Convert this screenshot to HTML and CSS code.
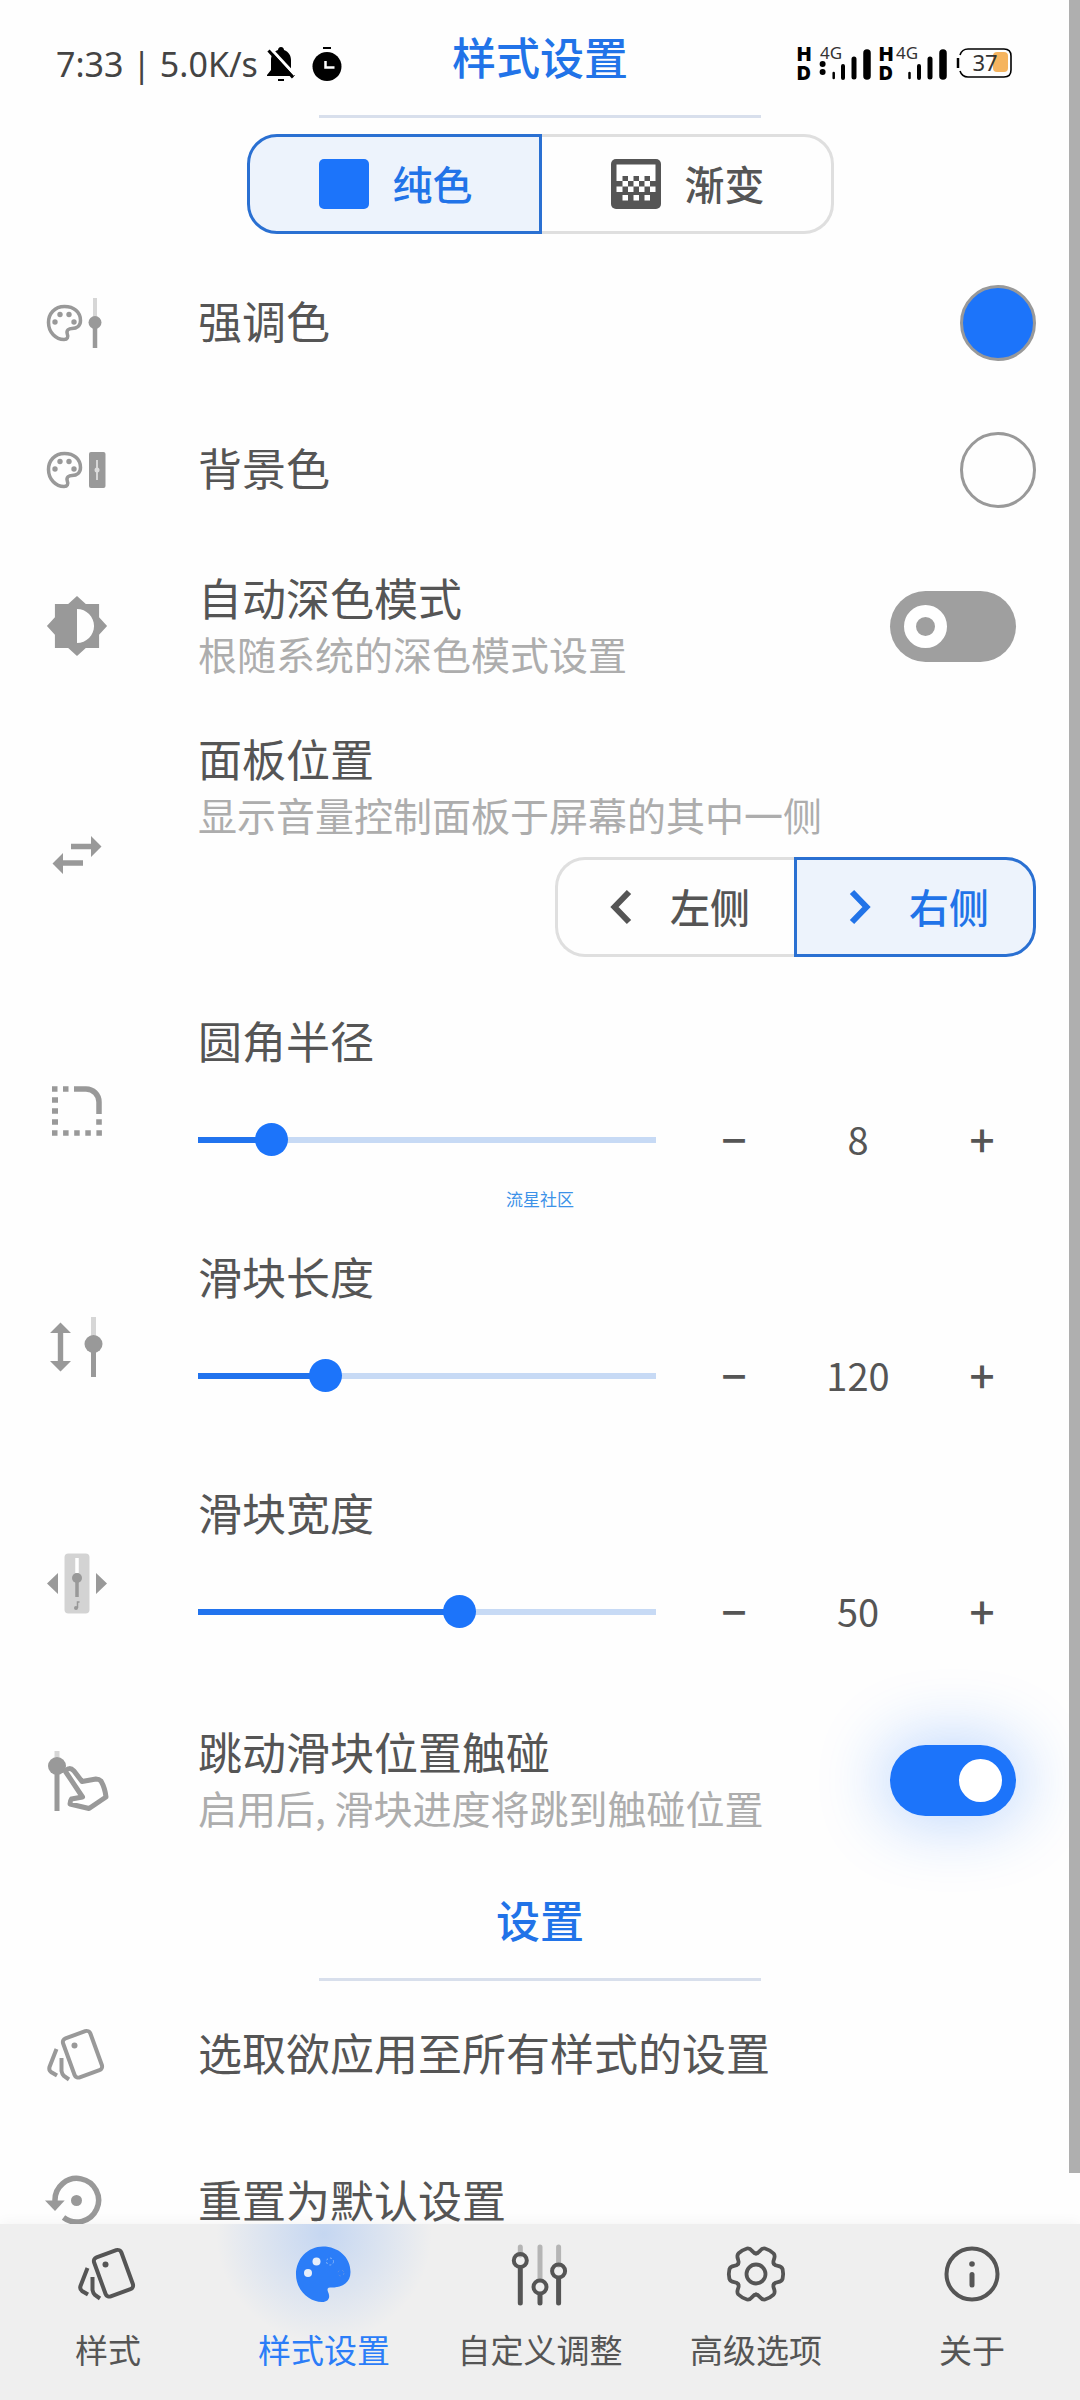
FILE: index.html
```html
<!DOCTYPE html>
<html lang="zh-CN">
  <head>
    <meta charset="UTF-8" />
    <meta name="viewport" content="width=device-width, initial-scale=1.0" />
    <title>样式设置</title>
    <link rel="stylesheet" href="styles.css">
  </head>
  <body>
    <!-- shared icon shapes -->
    <svg class="sprite" aria-hidden="true">
      <symbol id="palette" viewBox="0 0 66 66">
        <path d="M20.5 16.5C10.5 16.5 4.5 24 4.5 32.5C4.5 42.5 12 49.5 20 49.5C23.5 49.5 24.5 47 23.3 44C22 40 25 38.5 28 38.5C33 38.5 36.5 35.5 36.5 30.5C36.5 22 30 16.5 20.5 16.5Z" fill="none" stroke="currentColor" stroke-width="3.500" />
        <g fill="currentColor">
          <circle cx="11" cy="32" r="2.7" />
          <circle cx="16" cy="24.5" r="2.7" />
          <circle cx="25" cy="24.5" r="2.7" />
          <circle cx="30" cy="32" r="2.7" />
        </g>
      </symbol>
      <symbol id="cards" viewBox="0 0 66 66">
        <g fill="none" stroke="currentColor" stroke-width="4">
          <rect x="24" y="11.5" width="29" height="41.5" rx="4" transform="rotate(-20 38.5 32.3)" />
          <path d="M12.5 27L5.5 45Q4.5 48 7 50L13 53.5" />
          <path d="M17.5 36V49Q18 52 20 54L25 57.5" />
        </g>
        <circle cx="30.5" cy="23.5" r="3" fill="currentColor" />
      </symbol>
      <symbol id="gear-tooth" viewBox="-33 -33 66 66">
        <path d="M0-20.5C4-20.5 4-26.5 9-25.5Q14-24 17.6-20.5C20.9-16.7 15.75-13.7 17.75-10.25" />
      </symbol>
    </svg>

    <div class="status-bar">
      <div class="status-left">
        <span>7:33 | 5.0K/s</span>
        <svg class="status-icon" viewBox="0 0 30 36" aria-hidden="true">
          <path d="M15 1C17 1 18 2.500 18 4C23 6 25 10 25 14V24L29 29V30H1V29L5 24V14C5 10 7 6 12 4C12 2.500 13 1 15 1Z" />
          <path d="M12 33H18V35H12Z" />
          <path d="M5 3L29 29" stroke="#fff" stroke-width="3" />
          <path d="M2.500 4.500L27 31.500" stroke="#000" stroke-width="3" />
        </svg>
        <svg class="status-icon" viewBox="0 0 30 36" aria-hidden="true">
          <circle cx="15" cy="20.500" r="14.500" />
          <path d="M11 1H19V3H11Z" />
          <path d="M13.500 15V21.500H22.500" fill="none" stroke="#fff" stroke-width="2.500" />
        </svg>
      </div>
      <svg class="status-right" viewBox="0 0 218 40" aria-hidden="true">
        <g class="status-hd">
          <text x="2" y="17">H</text>
          <text x="2" y="36">D</text>
          <text x="84" y="17">H</text>
          <text x="84" y="36">D</text>
        </g>
        <g class="status-net">
          <text x="25" y="15">4G</text>
          <text x="101" y="15">4G</text>
        </g>
        <circle cx="27.600" cy="20" r="3" />
        <circle cx="27.600" cy="28" r="3" />
        <g stroke="#000" stroke-linecap="round">
          <path d="M38.700 29V34M114.500 29V34" stroke-width="2.500" />
          <path d="M48 22V34M124 22V34" stroke-width="4" />
          <path d="M59 15V33M135 15V33" stroke-width="5" />
          <path d="M72 9V32M148 9V32" stroke-width="7.500" />
        </g>
        <rect x="198" y="8" width="15" height="20" rx="4" fill="#f5b45f" />
        <path d="M165 11Q167 5 173 5H209Q216 5 216 12V26Q216 33 209 33H173Q167 33 165 27" fill="none" stroke="#000" stroke-width="1.600" />
        <path d="M163 14V24" stroke="#000" stroke-width="2.500" />
        <text class="status-level" x="190" y="27">37</text>
      </svg>
    </div>

    <main class="content">
      <div class="heading"><h1>样式设置</h1></div>

      <div class="fill-mode">
        <div class="segment segment-wide" role="group" aria-label="填充">
          <button type="button" class="active" aria-pressed="true">
            <svg class="segment-icon" viewBox="0 0 50 50" aria-hidden="true">
              <rect width="50" height="50" rx="5" class="accent-fill" />
            </svg>
            <span>纯色</span>
          </button>
          <button type="button" aria-pressed="false">
            <svg class="segment-icon" viewBox="0 0 50 50" aria-hidden="true">
              <rect width="50" height="50" rx="5" fill="currentColor" />
              <path fill="#fff" d="M5.500 5.500H44.500V22H39V17H33.500V22H28V17H22.500V22H17V17H11.500V22H5.500Z" />
              <path fill="#fff" d="M11.500 22H17V27.500H11.500ZM22.500 22H28V27.500H22.500ZM33.500 22H39V27.500H33.500ZM5.500 27.500H11.500V33H5.500ZM17 27.500H22.500V33H17ZM28 27.500H33.500V33H28ZM39 27.500H44.500V33H39ZM11.500 36H17V41.500H11.500ZM22.500 36H28V41.500H22.500ZM33.500 36H39V41.500H33.500Z" />
            </svg>
            <span>渐变</span>
          </button>
        </div>
      </div>

      <div class="row">
        <svg class="icon" viewBox="0 0 66 66" aria-hidden="true">
          <use href="#palette" />
          <path d="M51 8V32" class="pale" stroke-width="4" />
          <path d="M51 32V58" stroke="currentColor" stroke-width="4.500" />
          <circle cx="51" cy="32.500" r="6.500" fill="currentColor" />
        </svg>
        <span class="title">强调色</span>
        <button type="button" class="swatch swatch-accent" aria-label="强调色"></button>
      </div>

      <div class="row">
        <svg class="icon" viewBox="0 0 66 66" aria-hidden="true">
          <use href="#palette" />
          <rect x="45" y="15" width="16.500" height="36" rx="2" fill="currentColor" />
          <path d="M53 23V43" stroke="#ddd" stroke-width="1.800" />
          <circle cx="53" cy="33" r="2.500" fill="#ddd" />
        </svg>
        <span class="title">背景色</span>
        <button type="button" class="swatch" aria-label="背景色"></button>
      </div>

      <div class="row row-two-line">
        <svg class="icon" viewBox="-0.4 -0.4 24.8 24.8" aria-hidden="true">
          <path fill="currentColor" d="M20.300 15.310L23.310 12 20.300 8.690V3.700h-4.990L12 .69 8.690 3.700H3.700v4.990L.69 12 3.700 15.310V20.300h4.990L12 23.310 15.310 20.300H20.300zM12 18.400V5.600c3.530 0 6.400 2.870 6.400 6.400s-2.870 6.400-6.400 6.400z" />
        </svg>
        <label for="autoDark">
          <span class="title">自动深色模式</span>
          <span class="desc">根随系统的深色模式设置</span>
        </label>
        <input type="checkbox" class="switch" id="autoDark" />
      </div>

      <div class="row row-panel">
        <svg class="icon" viewBox="0 0 66 66" aria-hidden="true">
          <path fill="currentColor" d="M27 24.800H47V17L57.500 27.500L47 38V30.200H27ZM39 46.800H19V55L8.500 44.500L19 34V41.200H39Z" />
        </svg>
        <div>
          <span class="title">面板位置</span>
          <span class="desc">显示音量控制面板于屏幕的其中一侧</span>
          <div class="segment" role="group" aria-label="面板位置">
            <button type="button" aria-pressed="false">
              <svg class="segment-icon" viewBox="0 0 50 50" aria-hidden="true">
                <path d="M33 10L18.500 25L33 40" fill="none" stroke="currentColor" stroke-width="6" />
              </svg>
              <span>左侧</span>
            </button>
            <button type="button" class="active" aria-pressed="true">
              <svg class="segment-icon" viewBox="0 0 50 50" aria-hidden="true">
                <path d="M17 10L31.500 25L17 40" fill="none" stroke="currentColor" stroke-width="6" />
              </svg>
              <span>右侧</span>
            </button>
          </div>
        </div>
      </div>

      <div class="row row-slider">
        <svg class="icon" viewBox="0 0 66 66" aria-hidden="true">
          <g fill="none" stroke="currentColor" stroke-width="5.500">
            <path d="M30 15H42A13 13 0 0 1 55 28V40" />
            <path d="M8 15H30" stroke-dasharray="5.500 5.500" />
            <path d="M8 26H14M8 37H14M8 48H14M52.200 48H57.800" />
            <path d="M8 59H58" stroke-dasharray="5.500 5.600" />
          </g>
        </svg>
        <div>
          <label class="title" for="radius">圆角半径</label>
          <div class="controls">
            <input type="range" id="radius" min="0" max="60" value="8" style="--fill: 13%" />
            <div class="stepper">
              <button type="button" aria-label="减小圆角半径">−</button>
              <output for="radius">8</output>
              <button type="button" aria-label="增大圆角半径">+</button>
            </div>
          </div>
        </div>
      </div>

      <div class="row row-slider">
        <svg class="icon" viewBox="0 0 66 66" aria-hidden="true">
          <path fill="currentColor" d="M16.500 12.500L27 23H19.200V51H27L16.500 61.500L6 51H13.800V23H6Z" />
          <path d="M49.500 7V34" class="pale" stroke-width="5" />
          <path d="M49.500 34V67" stroke="currentColor" stroke-width="5" />
          <circle cx="49.500" cy="34" r="9" fill="currentColor" />
        </svg>
        <div>
          <label class="title" for="length">滑块长度</label>
          <div class="controls">
            <input type="range" id="length" min="60" max="289" value="120" style="--fill: 26%" />
            <div class="stepper">
              <button type="button" aria-label="减小滑块长度">−</button>
              <output for="length">120</output>
              <button type="button" aria-label="增大滑块长度">+</button>
            </div>
          </div>
        </div>
      </div>

      <div class="row row-slider">
        <svg class="icon" viewBox="0 0 66 66" aria-hidden="true">
          <rect x="20.500" y="7.500" width="25" height="60" rx="4" fill="#d3d3d3" />
          <path d="M33 12V27" stroke="#fff" stroke-width="3.500" />
          <path d="M33 32V51" stroke="currentColor" stroke-width="3.500" />
          <circle cx="33" cy="32" r="5" fill="currentColor" />
          <path d="M35.500 56H33.500V62" fill="none" stroke="currentColor" stroke-width="1.500" />
          <circle cx="32" cy="62" r="2" fill="currentColor" />
          <path fill="currentColor" d="M14 27V48L3 37.500ZM52 27V48L63 37.500Z" />
        </svg>
        <div>
          <label class="title" for="width">滑块宽度</label>
          <div class="controls">
            <input type="range" id="width" min="20" max="72" value="50" style="--fill: 57%" />
            <div class="stepper">
              <button type="button" aria-label="减小滑块宽度">−</button>
              <output for="width">50</output>
              <button type="button" aria-label="增大滑块宽度">+</button>
            </div>
          </div>
        </div>
      </div>

      <div class="row row-two-line">
        <svg class="icon" viewBox="0 0 66 66" aria-hidden="true">
          <path d="M13 4V19" class="pale" stroke-width="5" />
          <path d="M13 19V64" stroke="currentColor" stroke-width="5" />
          <circle cx="13" cy="19" r="9" fill="currentColor" />
          <path d="M21.500 24.500L38.500 50L27.500 52Q26 54 26 57L45 61.500L62 50Q61 41 57 34Q55 32 52 32L38 34.500L30 24Q25 19 21.500 24.500Z" fill="#fff" stroke="currentColor" stroke-width="5" stroke-linejoin="round" />
        </svg>
        <label for="jump">
          <span class="title">跳动滑块位置触碰</span>
          <span class="desc">启用后, 滑块进度将跳到触碰位置</span>
        </label>
        <input type="checkbox" class="switch" id="jump" checked />
      </div>

      <div class="heading"><h2>设置</h2></div>

      <div class="row">
        <svg class="icon" viewBox="0 0 66 66" aria-hidden="true"><use href="#cards" /></svg>
        <span class="title">选取欲应用至所有样式的设置</span>
      </div>

      <div class="row">
        <svg class="icon" viewBox="0 0 66 66" aria-hidden="true">
          <path d="M11 32A21.800 21.800 0 1 1 19.500 48.500" fill="none" stroke="currentColor" stroke-width="5.500" />
          <path d="M1 31.500H20.700L11 42Z" fill="currentColor" />
          <circle cx="32.500" cy="31.500" r="5.500" fill="currentColor" />
        </svg>
        <span class="title">重置为默认设置</span>
      </div>

      <div class="scrollbar"></div>
    </main>

    <nav class="tabs">
      <a href="#styles">
        <svg viewBox="0 0 66 66" aria-hidden="true"><use href="#cards" /></svg>
        样式
      </a>
      <a href="#style-settings" class="current" aria-current="page">
        <svg viewBox="0 0 66 66" aria-hidden="true">
          <path fill="currentColor" d="M32 5.500C17 5.500 5 17.500 5 33.500C5 49 18 61 31 61C37 61 39.500 57 37.500 52C35.500 47 36.500 46.500 41 46.500C52 46.500 59.500 41 59.500 31C59.500 16 47 5.500 32 5.500Z" />
          <circle cx="17" cy="32" r="4" fill="#e6eefb" />
          <circle cx="25.500" cy="20.500" r="4" fill="#e6eefb" />
          <circle cx="39" cy="20.500" r="3.500" fill="none" stroke="#8db8f7" stroke-dasharray="2 2" />
          <circle cx="50" cy="32" r="3" fill="none" stroke="#5b8fe6" stroke-dasharray="2 3" />
        </svg>
        样式设置
      </a>
      <a href="#custom">
        <svg viewBox="0 0 66 66" aria-hidden="true">
          <g stroke-linecap="round" stroke-width="5">
            <path d="M13.300 6V14M33 6V38M51.600 6V24" stroke="#b5b5b5" />
            <path d="M13.300 28V62M33 54V62M51.600 38V62" stroke="currentColor" />
          </g>
          <g fill="none" stroke="currentColor" stroke-width="4">
            <circle cx="13.300" cy="19.500" r="6.500" />
            <circle cx="33" cy="46" r="6.500" />
            <circle cx="51.600" cy="30" r="6.500" />
          </g>
        </svg>
        自定义调整
      </a>
      <a href="#advanced">
        <svg viewBox="-33 -33 66 66" fill="none" stroke="currentColor" stroke-width="3.800" stroke-linecap="round" aria-hidden="true">
          <use href="#gear-tooth" x="-33" y="-33" width="66" height="66" />
          <use href="#gear-tooth" x="-33" y="-33" width="66" height="66" transform="rotate(60)" />
          <use href="#gear-tooth" x="-33" y="-33" width="66" height="66" transform="rotate(120)" />
          <use href="#gear-tooth" x="-33" y="-33" width="66" height="66" transform="rotate(180)" />
          <use href="#gear-tooth" x="-33" y="-33" width="66" height="66" transform="rotate(240)" />
          <use href="#gear-tooth" x="-33" y="-33" width="66" height="66" transform="rotate(300)" />
          <circle r="9.500" />
        </svg>
        高级选项
      </a>
      <a href="#about">
        <svg viewBox="0 0 66 66" aria-hidden="true">
          <circle cx="33" cy="33" r="25.500" fill="none" stroke="currentColor" stroke-width="4" />
          <circle cx="33" cy="23" r="2.800" fill="currentColor" />
          <path d="M33 33.500V44" stroke="currentColor" stroke-width="5" stroke-linecap="round" />
        </svg>
        关于
      </a>
    </nav>

    <div class="watermark">流星社区</div>
  </body>
</html>
```

FILE: styles.css
```css
*,
*::before {
  box-sizing: border-box;
}
body {
  --accent: #1c74fa;
  --accent-text: #2173e8;
  --text: #555;
  --grey: #999;
  position: relative;
  display: flex;
  flex-direction: column;
  height: 100vh;
  margin: 0;
  background-color: #fefefe;
  color: var(--text);
  font-family: "Noto Sans CJK SC", sans-serif;
}
button {
  border: none;
  background: none;
  color: inherit;
  font-family: inherit;
  padding: 0;
}
.sprite {
  position: absolute;
  width: 0;
  height: 0;
}

/* system status bar, floats over the page */
.status-bar {
  position: absolute;
  top: 44px;
  left: 0;
  right: 0;
  display: flex;
  justify-content: space-between;
  padding: 0 67px 0 56px;
}
.status-left {
  display: flex;
  align-items: center;
  height: 40px;
  color: #444;
  font-family: "Noto Sans", sans-serif;
  font-size: 34px;
}
.status-icon {
  width: 30px;
  height: 36px;
  margin: 0 8px;
  fill: #000;
}
.status-right {
  width: 218px;
  height: 40px;
  overflow: visible;
}
.status-hd {
  font: 900 19px "Inter", sans-serif;
}
.status-net {
  fill: #333;
  font: 17px "Noto Sans", sans-serif;
}
.status-level {
  fill: #333;
  font: 22px "Noto Sans", sans-serif;
  text-anchor: middle;
}

.content {
  position: relative;
  flex: 1;
  min-height: 0;
  overflow: hidden;
}
.scrollbar {
  position: absolute;
  top: 0;
  right: 0;
  bottom: 51px;
  width: 11px;
  background-color: #afafaf;
}

.heading {
  padding-top: 23px;
  text-align: center;
}
.heading h1,
.heading h2 {
  margin: 0;
  color: var(--accent-text);
  font-size: 44px;
  font-weight: 500;
  line-height: 66px;
}
.heading::after {
  content: "";
  display: block;
  width: 41%;
  height: 3px;
  margin: 26px auto 0;
  background-color: #d8dfec;
}

.fill-mode {
  display: flex;
  justify-content: center;
  padding: 16px 0 15px;
}
.segment {
  display: flex;
}
.segment button {
  display: flex;
  align-items: center;
  gap: 24px;
  height: 100px;
  padding: 0 44px 0 38px;
  border: 3px solid #dfdfdf;
  font-size: 40px;
  font-weight: 500;
}
.segment-wide button {
  padding: 0 66px 0 69px;
}
.segment button:first-child {
  border-right: none;
  border-radius: 30px 0 0 30px;
}
.segment button:last-child {
  border-left: none;
  border-radius: 0 30px 30px 0;
}
.segment button.active {
  border: 3px solid #2a70d2;
  background-color: #edf3fc;
  color: var(--accent-text);
}
.segment span {
  padding-bottom: 3px;
}
.segment-icon {
  width: 50px;
  height: 50px;
}
.accent-fill {
  fill: var(--accent);
}

.row {
  display: grid;
  grid-template-columns: 66px 1fr auto;
  column-gap: 88px;
  align-items: center;
  min-height: 147px;
  padding: 0 44px;
}
.row-two-line {
  min-height: 166px;
}
.row-panel {
  padding-top: 22px;
  padding-bottom: 32px;
}
.row-panel,
.row-slider {
  grid-template-columns: 66px 1fr;
}
.row-panel .icon {
  margin-top: 16px;
}
.row-panel .segment {
  justify-content: flex-end;
  margin-top: 14px;
}
.row-slider {
  padding-top: 24px;
  padding-bottom: 52px;
}
.row-slider .icon {
  margin-top: 28px;
}
.icon {
  width: 66px;
  height: 66px;
  overflow: visible;
  color: var(--grey);
}
.pale {
  stroke: #d6d6d6;
}
.title,
.desc {
  display: block;
  padding-bottom: 5px;
}
.title {
  font-size: 44px;
  line-height: 55px;
}
.desc {
  color: #adadad;
  font-size: 39px;
  line-height: 47px;
  white-space: nowrap;
}

.swatch {
  width: 76px;
  height: 76px;
  border: 3px solid var(--grey);
  border-radius: 50%;
}
.swatch-accent {
  background-color: var(--accent);
}

.switch {
  appearance: none;
  display: flex;
  align-items: center;
  width: 126px;
  height: 71px;
  margin: 0 20px 0 0;
  padding: 0 14px;
  border-radius: 36px;
  background-color: #9f9f9f;
}
.switch::before {
  content: "";
  width: 43px;
  height: 43px;
  border: 12px solid #fff;
  border-radius: 50%;
}
.switch:checked {
  justify-content: flex-end;
  background-color: var(--accent);
  box-shadow: 0 0 64px 10px rgba(28, 116, 250, 0.26);
}
.switch:checked::before {
  background-color: #fff;
}

.controls {
  display: flex;
  align-items: center;
  gap: 24px;
  height: 66px;
  margin-top: 34px;
}
.controls input {
  appearance: none;
  flex: 1;
  min-width: 0;
  height: 34px;
  margin: 0;
  background: none;
}
.controls input::-webkit-slider-runnable-track {
  height: 6px;
  background: linear-gradient(to right, #2173ee var(--fill), #c7daf5 var(--fill));
}
.controls input::-webkit-slider-thumb {
  appearance: none;
  width: 33px;
  height: 33px;
  margin-top: -14px;
  border-radius: 50%;
  background-color: var(--accent);
}
.stepper {
  display: grid;
  grid-template-columns: 108px 140px 108px;
  align-items: center;
  padding-bottom: 4px;
  text-align: center;
}
.stepper output {
  font-size: 38px;
}
.stepper button {
  font-size: 44px;
  font-weight: 500;
  line-height: 62px;
}

.tabs {
  position: relative;
  display: grid;
  grid-template-columns: repeat(5, 1fr);
  background-color: #efefef;
  box-shadow: 0 0 14px rgba(0, 0, 0, 0.05);
}
.tabs a {
  display: flex;
  flex-direction: column;
  align-items: center;
  gap: 20px;
  padding: 17px 0 29px;
  color: var(--text);
  font-size: 33px;
  line-height: 44px;
  text-decoration: none;
}
.tabs .current {
  background: radial-gradient(circle 108px at 50% 10px, rgba(28, 116, 250, 0.2), rgba(28, 116, 250, 0));
  color: #2b7df8;
}
.tabs svg {
  width: 66px;
  height: 66px;
}

.watermark {
  position: absolute;
  top: 1187px;
  left: 0;
  right: 0;
  color: #3c92e8;
  font-size: 17px;
  line-height: 24px;
  text-align: center;
}
```
